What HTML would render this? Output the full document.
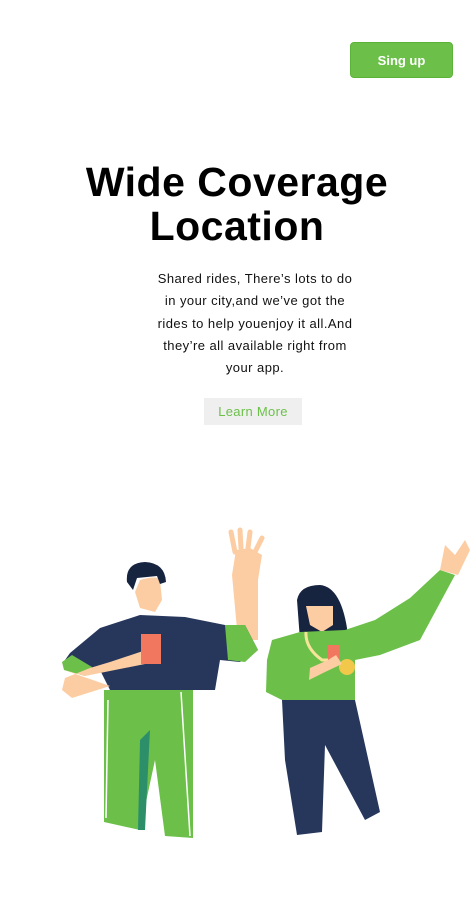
<!DOCTYPE html>
<html><head><meta charset="utf-8"><style>
*{margin:0;padding:0;box-sizing:border-box}
body{width:474px;height:922px;background:#fff;position:relative;overflow:hidden;font-family:"Liberation Sans",sans-serif}
.btn{position:absolute;left:350px;top:42px;width:103px;height:36px;background:#6cc04a;border:1px solid #5bb33a;border-radius:4px;color:#fff;font-weight:bold;font-size:13px;text-align:center;line-height:36px}
h1{position:absolute;left:0;width:474px;top:160px;text-align:center;font-size:41px;line-height:44px;font-weight:bold;color:#000;letter-spacing:0.5px}
p{position:absolute;left:155px;width:200px;top:268px;text-align:center;font-size:13px;line-height:22.3px;color:#111;letter-spacing:0.45px}
.lm{position:absolute;left:204px;top:398px;width:98px;height:27px;background:#efefef;color:#6cc04a;font-size:13px;text-align:center;line-height:27px;letter-spacing:0.3px}
svg{position:absolute;left:0;top:0}
</style></head><body>
<div class="btn">Sing up</div>
<h1>Wide Coverage<br>Location</h1>
<p>Shared rides, There’s lots to do in your city,and we’ve got the rides to help youenjoy it all.And they’re all available right from your app.</p>
<div class="lm">Learn More</div>
<svg width="474" height="922">
<!-- man -->
<path d="M238 640 L232 575 L236 550 L250 548 L262 555 L258 580 L258 640 Z" fill="#fccda3"/>
<path d="M235 552 L231 532 M241 548 L240 530 M248 548 L250 532 M255 552 L262 538" stroke="#fccda3" stroke-width="5" stroke-linecap="round"/>
<path d="M65 660 L70 653 L100 628 L140 615 L185 617 L225 625 L245 625 L258 650 L240 662 L220 660 L215 690 L110 690 L100 670 Z" fill="#27375c"/>
<path d="M225 625 L245 625 L258 650 L245 662 L228 660 Z" fill="#6cc04a"/>
<path d="M62 662 L72 655 L92 667 L85 676 L64 670 Z" fill="#6cc04a"/>
<path d="M64 670 L85 676 L150 663 L158 657 L155 647 L110 662 L90 668 L65 678 L62 690 L72 698 L110 686 Z" fill="#fccda3"/>
<rect x="141" y="634" width="20" height="30" fill="#f2775f"/>
<path d="M135 592 L140 608 L155 612 L162 600 L160 580 Q158 575 140 580 Z" fill="#fccda3"/>
<path d="M127 582 Q125 563 145 562 Q165 563 166 582 L160 584 L157 576 L137 578 L133 590 Z" fill="#172440"/>
<path d="M104 690 L193 690 L193 838 L165 836 L155 760 L140 830 L104 822 Z" fill="#6cc04a"/>
<path d="M140 740 L150 730 L145 830 L138 830 Z" fill="#2d8f6a"/>
<path d="M108 700 L106 818 M181 692 L190 836" stroke="#fff" stroke-width="1.5" fill="none"/>
<!-- woman -->
<path d="M297 600 Q300 585 320 585 Q342 587 348 635 L300 640 Z" fill="#172440"/>
<path d="M306 606 L333 606 L333 625 L322 632 L310 625 Z" fill="#fccda3"/>
<path d="M272 640 L300 632 L345 630 L375 620 L410 598 L440 570 L455 575 L420 640 L380 655 L355 660 L355 700 L282 700 L266 692 L267 660 Z" fill="#6cc04a"/>
<path d="M440 570 L445 545 L455 555 L465 540 L470 550 L458 575 Z" fill="#fccda3"/>
<path d="M306 632 Q305 648 322 660 L336 660" stroke="#f7e39a" stroke-width="3" fill="none"/>
<circle cx="347" cy="667" r="8" fill="#f2c84b"/>
<rect x="328" y="645" width="12" height="18" fill="#f2775f"/>
<path d="M310 668 L328 660 L336 655 L342 664 L325 672 L309 680 Z" fill="#fccda3"/>
<path d="M282 700 L355 700 L380 812 L365 820 L325 745 L322 832 L297 835 L285 760 Z" fill="#27375c"/>
</svg>
</body></html>
